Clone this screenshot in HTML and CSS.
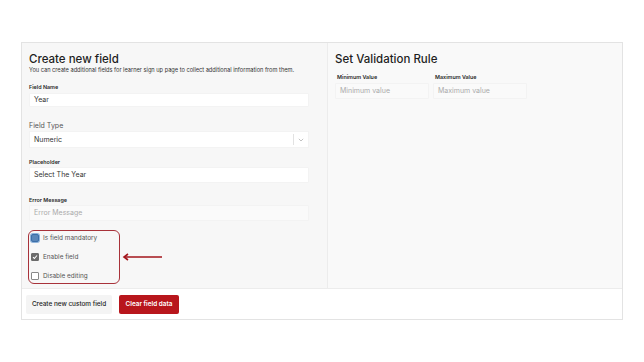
FILE: index.html
```html
<!DOCTYPE html>
<html>
<head>
<meta charset="utf-8">
<link rel="stylesheet" href="styles.css">
</head>
<body>
<div class="page">
  <div class="card">
    <div class="panels">
      <div class="left">
        <h1 class="title">Create new field</h1>
        <p class="sub">You can create additional fields for learner sign up page to collect additional information from them.</p>
        <div class="lbl lbl-first">Field Name</div>
        <div class="input input-name">Year</div>
        <div class="lbl-big">Field Type</div>
        <div class="select">
          <span class="sel-text">Numeric</span>
          <span class="sel-sep"></span>
          <svg class="chev" width="6" height="4" viewBox="0 0 6 4"><path d="M0.8 0.8 L3 3 L5.2 0.8" fill="none" stroke="#bbb" stroke-width="0.9"/></svg>
        </div>
        <div class="lbl lbl-gap">Placeholder</div>
        <div class="input">Select The Year</div>
        <div class="lbl lbl-gap2">Error Message</div>
        <div class="input input-ph">Error Message</div>
        <div class="checks-row">
          <div class="checks">
            <div class="chk"><span class="box box-focus"></span><span>Is field mandatory</span></div>
            <div class="chk"><span class="box box-on"><svg width="6" height="6" viewBox="0 0 6 6"><path d="M1 3.1 L2.4 4.5 L5 1.5" fill="none" stroke="#fff" stroke-width="1.1"/></svg></span><span>Enable field</span></div>
            <div class="chk"><span class="box"></span><span>Disable editing</span></div>
          </div>
          <svg class="arrow" width="42" height="8" viewBox="0 0 42 8"><path d="M3 4 H40" stroke="#a3151b" stroke-width="1.6"/><path d="M6 1 L2 4 L6 7" fill="none" stroke="#a3151b" stroke-width="1.6"/></svg>
        </div>
      </div>
      <div class="right">
        <h2 class="title">Set Validation Rule</h2>
        <div class="minmax">
          <div class="mm">
            <div class="lbl lbl-mm">Minimum Value</div>
            <div class="input input-ph input-mm">Minimum value</div>
          </div>
          <div class="mm">
            <div class="lbl lbl-mm">Maximum Value</div>
            <div class="input input-ph input-mm">Maximum value</div>
          </div>
        </div>
      </div>
    </div>
    <div class="bottom">
      <button class="btn btn-light">Create new custom field</button>
      <button class="btn btn-red">Clear field data</button>
    </div>
  </div>
</div>
</body>
</html>
```

FILE: styles.css
```css
html, body {
  margin: 0;
  padding: 0;
  background: #ffffff;
  font-family: Inter, "Liberation Sans", sans-serif;
  color: #222;
}
.page {
  padding: 42px 21px 0 21px;
}
.card {
  width: 600px;
  height: 276px;
  border: 1px solid #e3e3e3;
  display: flex;
  flex-direction: column;
  background: #fff;
}
.panels {
  display: flex;
  height: 245px;
}
.left {
  padding: 9px 18px 0 7px;
  background: #f7f7f7;
  border-right: 1px solid #ececec;
  box-sizing: content-box;
  width: 280px;
  display: flex;
  flex-direction: column;
}
.right {
  flex: 1;
  background: #f9f9f9;
  padding: 9px 7px 0 7px;
}
.title {
  margin: 0;
  font-size: 11.5px;
  line-height: 14px;
  font-weight: 500;
  color: #1e1e1e;
}
.sub {
  margin: 1px 0 0 0;
  font-size: 5.65px;
  line-height: 7px;
  color: #333;
  white-space: nowrap;
}
.lbl {
  font-size: 5.4px;
  line-height: 7px;
  font-weight: 600;
  color: #2a2a2a;
}
.lbl-first { margin-top: 10px; }
.lbl-gap { margin-top: 10.5px; }
.lbl-gap2 { margin-top: 13.5px; }
.lbl-big {
  margin-top: 13.5px;
  font-size: 7px;
  line-height: 9px;
  color: #555555;
}
.input {
  margin-top: 1.5px;
  height: 16px;
  background: #fff;
  border: 1px solid #f3f3f3;
  box-sizing: border-box;
  font-size: 7px;
  line-height: 14px;
  padding-left: 4px;
  color: #333;
  border-radius: 1px;
  white-space: nowrap;
}
.input-name {
  height: 14px;
  line-height: 12px;
  margin-top: 2px;
}
.input-ph {
  color: #aaa;
  background: #fafafa;
}
.select {
  margin-top: 1.5px;
  height: 17px;
  background: #fff;
  border: 1px solid #f3f3f3;
  box-sizing: border-box;
  display: flex;
  align-items: center;
  padding-left: 4px;
  font-size: 7px;
  color: #333;
}
.sel-text { flex: 1; }
.sel-sep {
  width: 1px;
  height: 11px;
  background: #e2e2e2;
  margin-right: 4px;
}
.chev { margin-right: 4px; }
.checks-row {
  margin-top: 9px;
  display: flex;
  align-items: center;
}
.checks {
  width: 88px;
  height: 52px;
  border: 1.5px solid #a8323a;
  border-radius: 6px;
  margin-left: -1px;
  padding: 0 0 0 2px;
  display: flex;
  flex-direction: column;
  gap: 6px;
}
.chk {
  height: 13px;
  display: flex;
  align-items: center;
  gap: 4px;
  font-size: 6.4px;
  color: #555;
  white-space: nowrap;
}
.box {
  width: 6px;
  height: 6px;
  border: 1px solid #888;
  border-radius: 1px;
  background: #fff;
  display: flex;
  align-items: center;
  justify-content: center;
}
.box-on {
  background: #6b6b6b;
  border-color: #6b6b6b;
}
.box-focus {
  background: #5a86b8;
  border-color: #3c6fa8;
  box-shadow: 0 0 0 1px #8fb3da;
  border-radius: 2px;
}
.arrow {
  margin-left: 2px;
}
.minmax {
  margin-top: 7.5px;
  display: flex;
  gap: 4px;
}
.mm {
  width: 94px;
}
.lbl-mm {
  margin-left: 2px;
}
.input-mm {
  margin-top: 2.5px;
}
.bottom {
  flex: 1;
  border-top: 1px solid #ececec;
  display: flex;
  align-items: center;
  gap: 7px;
  padding-left: 4px;
}
.btn {
  height: 19px;
  border: none;
  border-radius: 2px;
  font-family: Inter, "Liberation Sans", sans-serif;
  font-size: 6.4px;
  font-weight: 500;
  padding: 0;
  white-space: nowrap;
}
.btn-light {
  width: 86px;
  background: #f4f4f4;
  color: #222;
}
.btn-red {
  width: 60px;
  background: #b8161c;
  color: #fff;
  font-weight: 600;
}
```
